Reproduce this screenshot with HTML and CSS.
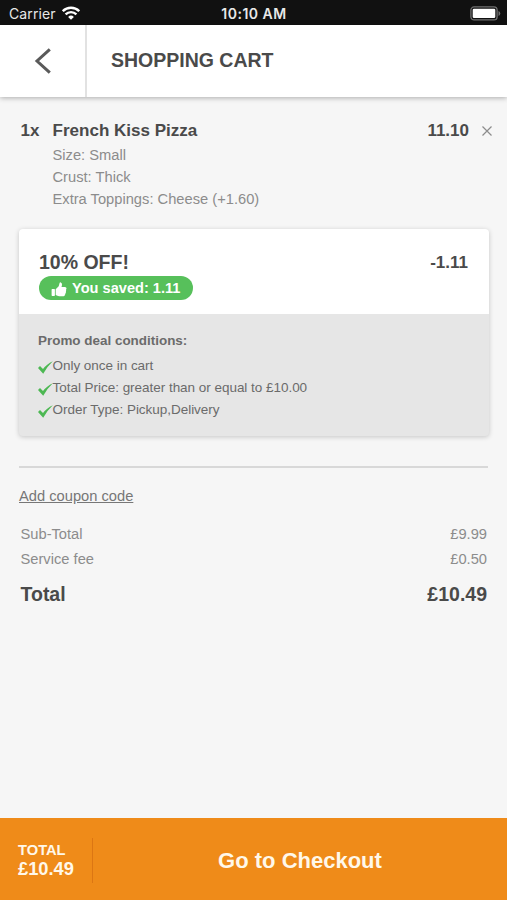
FILE: index.html
```html
<!DOCTYPE html>
<html lang="en">
<head>
<meta charset="utf-8">
<title>Shopping Cart</title>
<link rel="stylesheet" href="styles.css">
</head>
<body>
<div class="status">
  <div class="carrier"><span>Carrier</span>
    <svg class="wifi" width="18" height="14" viewBox="0 0 18 14" fill="none" stroke="#fff" stroke-width="2.4"><path d="M.8 5.2a11.6 11.6 0 0 1 16.4 0M3.6 8.4a7.6 7.6 0 0 1 10.8 0"/><path d="M9 13.8 6.100 10.900a4.100 4.100 0 0 1 5.800 0z" fill="#fff" stroke="none"/></svg>
  </div>
  <div class="clock">10:10 AM</div>
  <svg class="battery" width="31" height="15" viewBox="0 0 31 15"><rect x=".9" y=".9" width="26.2" height="13" rx="3.2" fill="none" stroke="#707070" stroke-width="1.3"/><rect x="2.7" y="2.700" width="22.6" height="9.4" rx="1.3" fill="#fff"/><path d="M28.5 5v5q1.8-.8 1.800-2.500T28.500 5z" fill="#707070"/></svg>
</div>
<header class="header">
  <div class="back"><svg width="18" height="26" viewBox="0 0 18 26" fill="none" stroke="#5a5a5a" stroke-width="3"><path d="M15.800 1.300 3 13l12.800 11.700"/></svg></div>
  <h1>SHOPPING CART</h1>
</header>
<main class="cart">
  <section class="item">
    <span class="qty">1x</span>
    <div class="details">
      <h2>French Kiss Pizza</h2>
      <p>Size: Small</p>
      <p>Crust: Thick</p>
      <p>Extra Toppings: Cheese (+1.60)</p>
    </div>
    <span class="price">11.10</span>
    <svg class="remove" width="10" height="10" viewBox="0 0 10 10" stroke="#8c8c8c" stroke-width="1.2"><path d="M.5.5l9 9M9.500.5l-9 9"/></svg>
  </section>
  <section class="promo">
    <div class="deal">
      <div>
        <h3>10% OFF!</h3>
        <div class="saved"><svg width="16" height="15" viewBox="0 0 16 15" fill="#fff"><path d="M.6 7.600q0-.7.7-.7h1.900q.7 0 .7.7v5.600q0 .7-.7.7H1.300q-.7 0-.7-.7z"/><path d="M4.700 7.300 7.700 4.200 8.600 1q.3-.9 1.200-.6 1.500.6 1.200 2.500L10.500 5h3.500q1.500.1 1.500 1.500 0 .8-.6 1.200.6.700 0 1.700.4 1-.4 1.700.2 1-.6 1.600-.1 1.500-1.600 1.500H8.400q-1.400 0-2.500-.8L4.700 13z"/></svg><span>You saved: 1.11</span></div>
      </div>
      <span class="discount">-1.11</span>
    </div>
    <div class="conditions">
      <h4>Promo deal conditions:</h4>
      <ul>
        <li><svg class="check" viewBox="0 0 15 13"><path d="M0 7 2 5.100 5 8.100Q8.600 3 14.800.2 9 5.600 5.200 12.800z"/></svg>Only once in cart</li>
        <li><svg class="check" viewBox="0 0 15 13"><path d="M0 7 2 5.100 5 8.100Q8.600 3 14.800.2 9 5.600 5.200 12.800z"/></svg>Total Price: greater than or equal to £10.00</li>
        <li><svg class="check" viewBox="0 0 15 13"><path d="M0 7 2 5.100 5 8.100Q8.600 3 14.800.2 9 5.600 5.200 12.800z"/></svg>Order Type: Pickup,Delivery</li>
      </ul>
    </div>
  </section>
  <section class="summary">
    <a class="coupon">Add coupon code</a>
    <div class="row"><span>Sub-Total</span><span>£9.99</span></div>
    <div class="row"><span>Service fee</span><span>£0.50</span></div>
    <div class="row total"><span>Total</span><span>£10.49</span></div>
  </section>
</main>
<footer class="checkout">
  <div class="amount"><span class="label">TOTAL</span><span class="value">£10.49</span></div>
  <div class="go">Go to Checkout</div>
</footer>
</body>
</html>
```
FILE: styles.css
```css
* { box-sizing: border-box; margin: 0; padding: 0; }
body {
  width: 507px; height: 900px; overflow: hidden;
  display: flex; flex-direction: column;
  background: #f6f6f6; color: #4a4a4a;
  font-family: "Liberation Sans", Arial, sans-serif;
}
.status {
  height: 25px; flex: none; background: #111; color: #e8e8e8;
  display: grid; grid-template-columns: 1fr auto 1fr; align-items: center;
  padding: 3px 7px 0 8px;
  font-family: Inter, sans-serif; font-size: 14px; line-height: 22px;
}
.carrier { display: flex; align-items: center; gap: 6px; letter-spacing: 0.1px; padding-left: 1px; }
.wifi { display: block; margin-top: -3px; }
.clock { font-weight: 600; font-size: 14px; letter-spacing: 0.5px; }
.battery { justify-self: end; margin: -2px -1px 0 0; }
.header {
  height: 72px; flex: none; display: flex; align-items: stretch;
  background: #fff; box-shadow: 0 1px 5px rgba(0,0,0,.3);
}
.back { width: 87px; border-right: 2px solid #e2e2e2; display: flex; align-items: center; justify-content: center; padding-left: 1px; }
.header h1 { font-size: 19.5px; line-height: 70px; padding-left: 24px; }
.cart { flex: 1; padding: 23px 19px 0; }
.item { display: flex; align-items: flex-start; height: 109px; margin-right: -5px; }
.qty { width: 33.5px; padding-left: 1.5px; font-size: 17px; line-height: 22px; font-weight: bold; flex: none; }
.details { flex: 1; color: #8c8c8c; font-size: 14.7px; line-height: 22px; }
.details h2 { font-size: 17.05px; line-height: 22px; color: #4a4a4a; margin-bottom: 2px; }
.price { font-size: 17px; line-height: 22px; font-weight: bold; }
.remove { margin: 6px 1px 0 13px; }
.promo { width: 470px; border-radius: 4px; overflow: hidden; box-shadow: 0 1px 5px rgba(0,0,0,.2); background: #e6e6e6; }
.deal { height: 85px; background: #fff; display: flex; justify-content: space-between; padding: 21px 21px 0 20px; }
.deal h3 { font-size: 19.5px; line-height: 24px; }
.saved {
  margin-top: 2px; width: 154px; height: 24px; border-radius: 12px;
  background: #57c05b; color: #fff; font-size: 14.6px; font-weight: bold; line-height: 24px;
  display: flex; align-items: center; gap: 5px; padding-left: 12px;
}
.saved svg { margin-top: 3px; }
.discount { font-size: 17px; line-height: 26px; font-weight: bold; }
.conditions { height: 122px; padding: 17px 19px 0; color: #6b6b6b; font-size: 13.5px; }
.conditions h4 { font-size: 13.45px; line-height: 20px; margin-bottom: 4px; }
.conditions ul { list-style: none; }
.conditions li { display: flex; align-items: center; height: 22px; line-height: 22px; letter-spacing: -0.03px; }
.check { width: 15px; height: 13px; fill: #4db853; margin: 2px -0.5px 0 0; flex: none; }
.summary { margin-top: 30px; width: 469px; border-top: 2px solid #d8d8d8; padding-top: 17px; }
.coupon { display: block; font-size: 14.7px; line-height: 22px; color: #777; text-decoration: underline; margin-bottom: 15px; }
.row { display: flex; justify-content: space-between; padding: 0 1px 0 1.5px; font-size: 14.7px; line-height: 24.5px; color: #8c8c8c; }
.total { font-size: 19.5px; font-weight: bold; line-height: 26px; color: #4a4a4a; margin-top: 10px; }
.checkout { height: 82px; flex: none; background: #ef8b19; color: #fff8ea; display: flex; align-items: center; font-weight: bold; }
.amount { width: 93px; height: 45px; margin-top: 2px; padding-left: 18px; border-right: 1px solid #dc7613; display: flex; flex-direction: column; justify-content: center; }
.label { font-size: 14.7px; line-height: 17px; }
.value { font-size: 18.3px; line-height: 20px; }
.go { flex: 1; text-align: center; font-size: 22px; padding-top: 3px; }
```
